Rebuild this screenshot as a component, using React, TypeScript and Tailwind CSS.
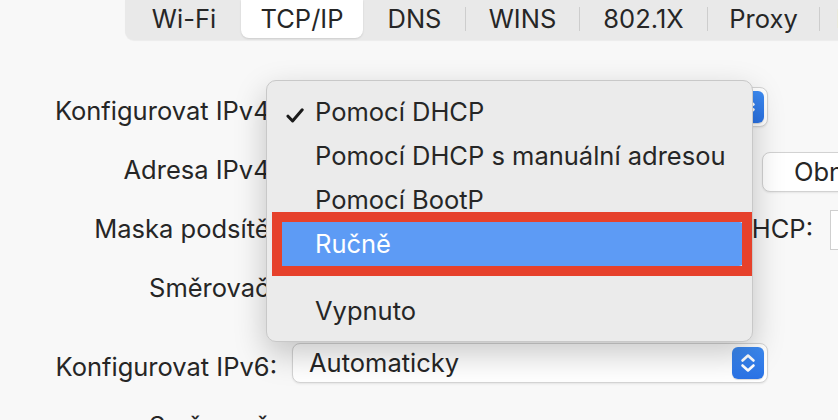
import React from "react";

const tabs = [
  { label: "Wi-Fi", cls: "w-[112px]" },
  { label: "TCP/IP", cls: "w-[122px]", active: true },
  { label: "DNS", cls: "w-[101px]" },
  { label: "WINS", cls: "w-[113px]" },
  { label: "802.1X", cls: "w-[127px]" },
  { label: "Proxy", cls: "w-[111px]" },
  { label: "Hardware", cls: "w-[150px]" },
];

const Stepper = () => (
  <div className="flex h-[32px] w-[32px] items-center justify-center rounded-[6px] bg-gradient-to-b from-[#3d8bf3] to-[#2a72e5] shadow-[0_1px_1px_rgba(0,0,0,0.15)]">
    <svg width="32" height="32" viewBox="0 0 32 32" fill="none">
      <path d="M10.5 13.5 16 8.5l5.5 5" stroke="white" strokeWidth="2.6" strokeLinecap="round" strokeLinejoin="round" />
      <path d="M10.5 18.5 16 23.5l5.5-5" stroke="white" strokeWidth="2.6" strokeLinecap="round" strokeLinejoin="round" />
    </svg>
  </div>
);

const PopUp = ({ value }: { value: string }) => (
  <div className="flex h-[40px] w-[476px] shrink-0 items-center justify-between rounded-[8px] border border-[#d4d4d4] bg-white pl-[16px] pr-[3px] shadow-[0_1px_2px_rgba(0,0,0,0.08)]">
    <span>{value}</span>
    <Stepper />
  </div>
);

const Label = ({ children }: { children: React.ReactNode }) => (
  <div className="w-[277px] shrink-0 pt-2 text-right whitespace-nowrap">{children}</div>
);

export default function App() {
  return (
    <div className="relative h-[420px] w-[838px] overflow-hidden bg-[#f8f8f8] font-[Inter,sans-serif] text-[25.5px] leading-[30px] text-[#262626]">
      {/* Tab bar */}
      <div className="h-[40px] pl-[125px]">
        <div className="flex h-[40px] w-[900px] items-center rounded-bl-[9px] bg-[#e9e9e9] pb-[2px] pl-[3px] shadow-[0_1px_1px_rgba(0,0,0,0.05)]">
          {tabs.map((t, i) => (
            <React.Fragment key={t.label}>
              {i > 0 && (
                <div
                  className={
                    tabs[i - 1].active || t.active
                      ? "h-[24px] w-px shrink-0"
                      : "h-[24px] w-px shrink-0 bg-[#cdcdcd]"
                  }
                />
              )}
              <div
                className={
                  t.active
                    ? `${t.cls} flex h-[38px] shrink-0 items-center justify-center rounded-b-[8px] bg-white shadow-[0_1px_2px_rgba(0,0,0,0.12)]`
                    : `${t.cls} flex h-[38px] shrink-0 items-center justify-center`
                }
              >
                {t.label}
              </div>
            </React.Fragment>
          ))}
        </div>
      </div>

      {/* Form */}
      <div className="flex flex-col gap-[19px] pt-[47px]">
        <div className="flex h-[40px] items-center gap-[15px]">
          <Label>Konfigurovat IPv4:</Label>
          <PopUp value="Pomocí DHCP" />
        </div>

        <div className="flex h-[40px] items-center gap-[15px]">
          <Label>Adresa IPv4:</Label>
          <div className="flex w-[738px] shrink-0 items-center">
            <span className="w-[470px] shrink-0 pt-2">192.168.1.24</span>
            <div className="mt-3 flex h-[40px] w-[300px] shrink-0 items-center rounded-[8px] border border-[#d2d2d2] bg-white pl-[31px] shadow-[0_1px_2px_rgba(0,0,0,0.08)] whitespace-nowrap">
              Obnovit zápůjčku DHCP
            </div>
          </div>
        </div>

        <div className="flex h-[40px] items-center gap-[15px]">
          <Label>Maska podsítě:</Label>
          <div className="flex w-[738px] shrink-0 items-center">
            <span className="w-[200px] shrink-0 pt-2">255.255.255.0</span>
            <span className="flex-1 pt-2 text-right whitespace-nowrap">ID klienta DHCP:</span>
            <div className="ml-[17px] mt-[10px] h-[40px] w-[200px] shrink-0 border border-[#cfcfcf] bg-white" />
          </div>
        </div>

        <div className="flex h-[40px] items-center gap-[15px]">
          <Label>Směrovač:</Label>
          <span className="pt-2">192.168.1.1</span>
        </div>

        <div className="mt-[20px] flex h-[40px] items-center gap-[15px]">
          <Label>Konfigurovat IPv6:</Label>
          <PopUp value="Automaticky" />
        </div>

        <div className="flex h-[40px] items-center gap-[15px]">
          <Label>Směrovač:</Label>
        </div>
      </div>

      {/* Open pop-up menu */}
      <div className="absolute left-[266px] top-[80px] w-[487px] rounded-[10px] border border-[#c8c8c8] bg-[#ebebeb] pb-[8px] pt-[9px] shadow-[0_12px_32px_rgba(0,0,0,0.22)]">
        <div className="flex h-[44px] items-center pl-[19px]">
          <svg className="mt-[6px] shrink-0" width="18" height="15" viewBox="0 0 18 15" fill="none">
            <path d="M2 8.2 6.6 13 16.2 1.8" stroke="#1a1a1a" strokeWidth="3" strokeLinecap="round" strokeLinejoin="round" />
          </svg>
          <span className="ml-[11px]">Pomocí DHCP</span>
        </div>
        <div className="flex h-[44px] items-center pl-[48px] whitespace-nowrap">Pomocí DHCP s manuální adresou</div>
        <div className="flex h-[44px] items-center pl-[48px]">Pomocí BootP</div>
        <div className="ml-[10px] mr-[8px] flex h-[44px] items-center rounded-[5px] bg-[#5d9bf5] pl-[38px] text-white">
          Ručně
        </div>
        <div className="h-[23px]" />
        <div className="flex h-[44px] items-center pl-[48px]">Vypnuto</div>

        {/* annotation box */}
        <div className="absolute left-[5px] top-[131px] h-[64px] w-[480px] border-[10px] border-[#e6412b]" />
      </div>
    </div>
  );
}
